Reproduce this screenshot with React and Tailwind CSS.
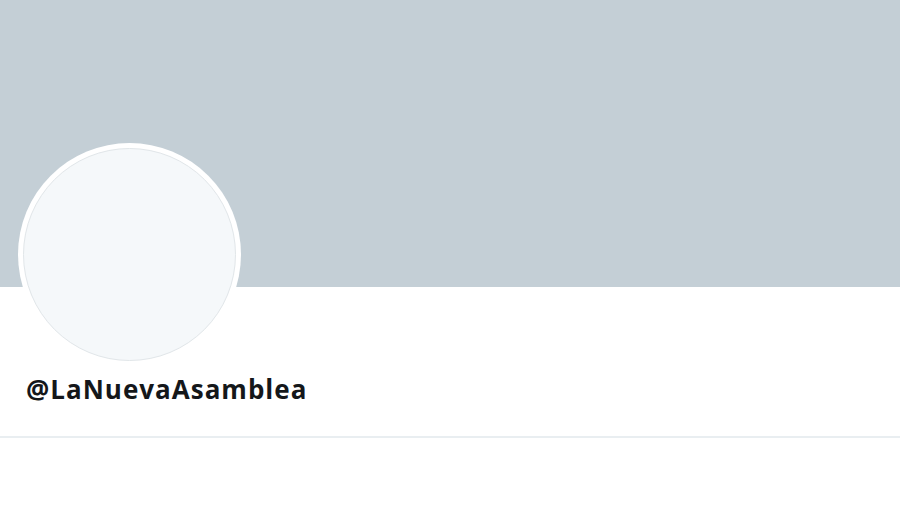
export default function App() {
  return (
    <div className="w-[900px] h-[506px] bg-white overflow-hidden" style={{ fontFamily: '"Open Sans", "Liberation Sans", sans-serif' }}>
      <div className="h-[287px] bg-[#c4cfd6]" />
      <div className="px-[18px]">
        <div className="-mt-[144px] w-[223px] h-[223px] rounded-full bg-white p-[5px]">
          <div className="w-full h-full rounded-full bg-[#f5f8fa] border border-[#e1e6e9]" />
        </div>
        <div className="pl-[8px] mt-[0px] h-[46px] flex items-center">
          <h1 className="text-[26px] font-bold text-[#14171a] leading-none tracking-[1px]">@LaNuevaAsamblea</h1>
        </div>
      </div>
      <div className="mt-[24px] h-[2px] bg-[#e9eef1]" />
    </div>
  )
}
